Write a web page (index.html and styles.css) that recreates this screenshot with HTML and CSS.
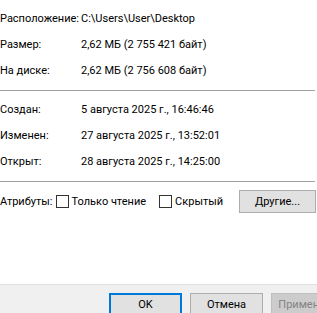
FILE: index.html
```html
<!DOCTYPE html>
<html lang="ru">
<head>
  <meta charset="UTF-8">
  <title>Свойства</title>
  <link rel="stylesheet" href="styles.css">
</head>
<body>
<div class="dialog">
  <div class="panel">
    <div class="group">
      <div class="row"><span class="label">Расположение:</span><span class="value">C:\Users\User\Desktop</span></div>
      <div class="row"><span class="label">Размер:</span><span class="value">2,62 МБ (2 755 421 байт)</span></div>
      <div class="row"><span class="label">На диске:</span><span class="value">2,62 МБ (2 756 608 байт)</span></div>
    </div>
    <div class="sep"></div>
    <div class="group">
      <div class="row"><span class="label">Создан:</span><span class="value">5 августа 2025 г., 16:46:46</span></div>
      <div class="row"><span class="label">Изменен:</span><span class="value">27 августа 2025 г., 13:52:01</span></div>
      <div class="row"><span class="label">Открыт:</span><span class="value">28 августа 2025 г., 14:25:00</span></div>
    </div>
    <div class="sep"></div>
    <div class="attrs">
      <span class="attr-label">Атрибуты:</span>
      <label class="check"><span class="box"></span>Только чтение</label>
      <label class="check hidden-attr"><span class="box"></span>Скрытый</label>
      <button class="btn other">Другие...</button>
    </div>
  </div>
  <div class="footer">
    <button class="btn ok">OK</button>
    <button class="btn">Отмена</button>
    <button class="btn disabled">Применить</button>
  </div>
</div>
</body>
</html>
```

FILE: styles.css
```css
body {
  margin: 0;
  font-family: Roboto, sans-serif;
  font-size: 11px;
  color: #000;
  background: #f0f0f0;
  overflow: hidden;
}
.dialog {
  width: 317px;
  height: 313px;
  display: flex;
  flex-direction: column;
}
.panel {
  background: #fff;
  height: 285px;
  flex-shrink: 0;
  border-bottom: 1px solid #dfdfdf;
  padding-top: 6px;
  box-sizing: border-box;
}
.row {
  display: flex;
  height: 26px;
  line-height: 26px;
  white-space: nowrap;
}
.label {
  width: 81px;
  flex-shrink: 0;
}
.sep {
  height: 1px;
  background: #a0a0a0;
  margin: 6px 2px 6px 0;
}
.attrs {
  display: flex;
  align-items: center;
  height: 23px;
  margin-top: 8px;
  white-space: nowrap;
}
.check {
  display: flex;
  align-items: center;
  margin-left: 3px;
}
.box {
  width: 11px;
  height: 11px;
  border: 1px solid #333;
  background: #fff;
  margin-right: 3px;
}
.hidden-attr { margin-left: 13px; }
.btn {
  font: inherit;
  color: #000;
  background: #e1e1e1;
  border: 1px solid #adadad;
  height: 23px;
  padding: 0;
  box-sizing: border-box;
}
.other {
  width: 77px;
  margin-left: auto;
  margin-right: 1px;
}
.footer {
  display: flex;
  gap: 8px;
  padding: 8px 0 0 109px;
}
.footer .btn { width: 73px; flex-shrink: 0; }
.ok { border: 2px solid #0078d7; }
.disabled {
  background: #cccccc;
  border-color: #bfbfbf;
  color: #838383;
}
```
